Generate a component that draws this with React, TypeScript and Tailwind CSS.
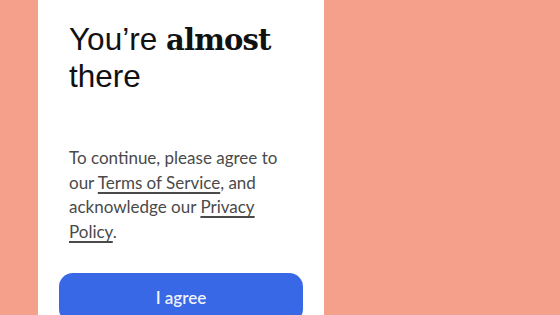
export default function App() {
  return (
    <div className="min-h-[315px] w-full overflow-hidden bg-[#f4a08a]">
      <div className="ml-[38px] w-[286px] bg-white px-[21px] pt-[21px] pb-[40px]">
        <h1 className="px-[10px] font-['Liberation_Sans',Arial,sans-serif] text-[31.5px] leading-[36px] font-normal text-[#111111]">
          You’re <span className="font-['DejaVu_Serif',serif] text-[29px] font-bold tracking-[-0.8px]">almost</span>
          <br />
          there
        </h1>
        <p className="mt-[52px] px-[10px] font-['Lato',sans-serif] text-[17px] leading-[24.5px] text-[#4a4a4a]">
          To continue, please agree to our{' '}
          <a href="#" className="underline decoration-[1.5px] underline-offset-[3px]">
            Terms of Service
          </a>
          , and acknowledge our{' '}
          <a href="#" className="underline decoration-[1.5px] underline-offset-[3px]">
            Privacy Policy
          </a>
          .
        </p>
        <button className="mt-[29px] h-[50px] w-full rounded-[14px] bg-[#3868e6] font-['Lato',sans-serif] text-[17px] font-semibold text-[#eef2fd]">
          I agree
        </button>
      </div>
    </div>
  );
}
